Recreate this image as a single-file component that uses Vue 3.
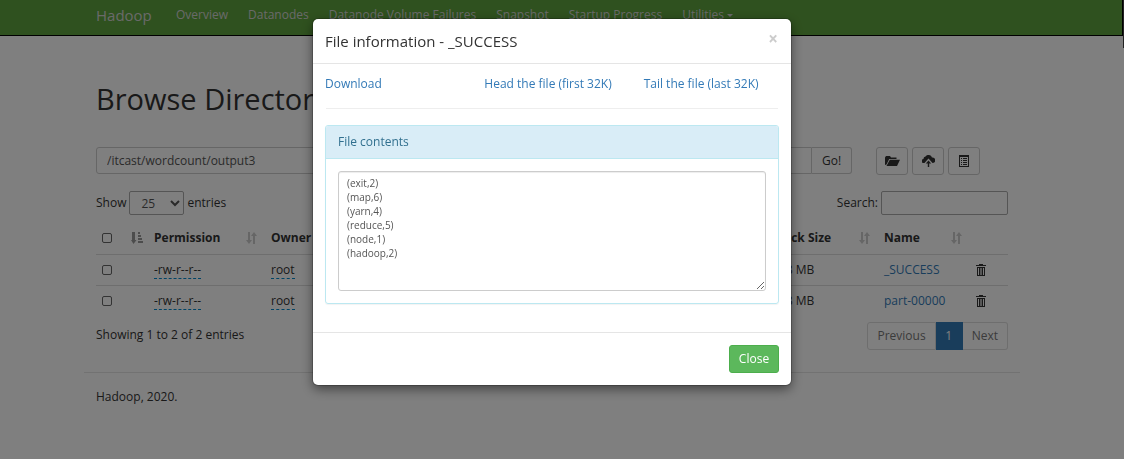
<script setup>
import { ref } from 'vue'

const navItems = ['Overview', 'Datanodes', 'Datanode Volume Failures', 'Snapshot', 'Startup Progress']
const columns = [
  { key: 'permission', label: 'Permission' },
  { key: 'owner', label: 'Owner' },
  { key: 'group', label: 'Group' },
  { key: 'size', label: 'Size' },
  { key: 'modified', label: 'Last Modified' },
  { key: 'replication', label: 'Replication' },
  { key: 'block', label: 'Block Size' },
  { key: 'name', label: 'Name' },
]
const files = [
  { permission: '-rw-r--r--', owner: 'root', group: 'root', size: '0 B', modified: 'Jul 12', replication: '1', block: '128 MB', name: '_SUCCESS' },
  { permission: '-rw-r--r--', owner: 'root', group: 'root', size: '55 B', modified: 'Jul 12', replication: '1', block: '128 MB', name: 'part-00000' },
]
const directory = ref('/itcast/wordcount/output3')
const search = ref('')
const pageSize = ref('25')
const contents = ref('(exit,2)\n(map,6)\n(yarn,4)\n(reduce,5)\n(node,1)\n(hadoop,2)')
</script>

<template>
  <div class="page">
    <header class="navbar">
      <nav class="container nav-inner">
        <a class="brand" href="#">Hadoop</a>
        <a v-for="item in navItems" :key="item" class="nav-link" href="#">{{ item }}</a>
        <a class="nav-link" href="#">Utilities <span class="caret"></span></a>
      </nav>
    </header>

    <main class="container">
      <h1>Browse Directory</h1>

      <div class="path-row">
        <div class="path-group">
          <input v-model="directory" class="path-input" type="text" aria-label="Directory">
          <button class="btn go" type="button">Go!</button>
        </div>
        <div class="actions">
          <button class="btn icon-btn" type="button" aria-label="Create directory">
            <svg width="15" height="12" viewBox="0 0 15 12"><path d="M0 10V2.500L1 1h4l1 1.500h5.500V4H4.200L1.500 9.500z" /><path d="M4.800 4.800H15L12 11H1.500z" /></svg>
          </button>
          <button class="btn icon-btn" type="button" aria-label="Upload files">
            <svg width="13" height="12" viewBox="0 0 13 12"><path d="M2.500 8H2A2 2 0 0 1 1.500 4 2.300 2.300 0 0 1 3.500 1.600 3.600 3.600 0 0 1 10 2.600 2.700 2.700 0 0 1 11 8H10.500L6.500 3.600z" /><path d="M6.500 5.400L9.200 8.400H7.200V12H5.800V8.400H3.800z" /></svg>
          </button>
          <button class="btn icon-btn" type="button" aria-label="Cut and paste">
            <svg width="12" height="12" viewBox="0 0 12 12"><path d="M1 0h10v12H1zM2 2v9h8V2z" fill-rule="evenodd" /><path d="M3 3h1v1H3zM5 3h4v1H5zM3 5h1v1H3zM5 5h4v1H5zM3 7h1v1H3zM5 7h4v1H5zM3 9h1v1H3zM5 9h4v1H5z" /></svg>
          </button>
        </div>
      </div>

      <div class="table-tools">
        <label class="tool">Show
          <select v-model="pageSize" class="page-size">
            <option>10</option>
            <option>25</option>
            <option>50</option>
          </select>
          entries</label>
        <label class="tool">Search: <input v-model="search" class="search" type="search"></label>
      </div>

      <table>
        <colgroup>
          <col class="c-check"><col class="c-permission"><col class="c-owner"><col class="c-group"><col class="c-size">
          <col class="c-modified"><col class="c-replication"><col class="c-block"><col class="c-name"><col class="c-delete">
        </colgroup>
        <thead>
          <tr>
            <th>
              <div class="head-cell">
                <input type="checkbox" aria-label="Select all">
                <svg class="sorted" width="12" height="12" viewBox="0 0 12 12"><path d="M1 0h3v8h1.500L2.500 12 0 8h1zM7 0h2v2H7zM7 3h3v2H7zM7 6h4v2H7zM7 9h5v2H7z" /></svg>
              </div>
            </th>
            <th v-for="col in columns" :key="col.key">
              <div class="head-cell">
                {{ col.label }}
                <svg class="sort" width="11" height="12" viewBox="0 0 11 12"><path d="M2 0h2v8h2L3 12 0 8h2zM7 12h2V4h2L8 0 5 4h2z" /></svg>
              </div>
            </th>
            <th></th>
          </tr>
        </thead>
        <tbody>
          <tr v-for="file in files" :key="file.name">
            <td><input type="checkbox" :aria-label="'Select ' + file.name"></td>
            <td><span class="editable">{{ file.permission }}</span></td>
            <td><span class="editable">{{ file.owner }}</span></td>
            <td><span class="editable">{{ file.group }}</span></td>
            <td>{{ file.size }}</td>
            <td>{{ file.modified }}</td>
            <td><span class="editable">{{ file.replication }}</span></td>
            <td>{{ file.block }}</td>
            <td><a href="#">{{ file.name }}</a></td>
            <td>
              <button class="trash" type="button" :aria-label="'Delete ' + file.name">
                <svg width="10" height="12" viewBox="0 0 10 12"><path d="M3 0h4v1h3v1H0V1h3zM1 3h8v9H1zM2 4v7h1V4zM4 4v7h.6V4zM5.400 4v7H6V4zM7 4v7h1V4z" fill-rule="evenodd" /></svg>
              </button>
            </td>
          </tr>
        </tbody>
      </table>

      <div class="table-foot">
        <span>Showing 1 to 2 of 2 entries</span>
        <nav class="pagination" aria-label="Pages">
          <a href="#">Previous</a><a class="active" href="#">1</a><a href="#">Next</a>
        </nav>
      </div>
    </main>
    <footer class="container">
      <hr>
      <p>Hadoop, 2020.</p>
    </footer>
  </div>

  <div class="scrollbar"></div>
  <div class="backdrop">
    <section class="modal" role="dialog" aria-labelledby="file-title">
      <header class="modal-header">
        <h2 id="file-title">File information - _SUCCESS</h2>
        <button class="dismiss" type="button" aria-label="Dismiss">×</button>
      </header>
      <div class="modal-body">
        <div class="links">
          <a href="#">Download</a>
          <a href="#">Head the file (first 32K)</a>
          <a href="#">Tail the file (last 32K)</a>
        </div>
        <div class="panel">
          <label class="panel-heading" for="file-contents">File contents</label>
          <div class="panel-body">
            <textarea id="file-contents" v-model="contents"></textarea>
          </div>
        </div>
      </div>
      <footer class="modal-footer">
        <button class="close-btn" type="button">Close</button>
      </footer>
    </section>
  </div>
</template>

<style>
html, body, #app { height: 100%; }
body { background: #fff; overflow: hidden; }
</style>

<style scoped>
* { box-sizing: border-box; }
.page, .backdrop {
  font-family: "Open Sans", "Noto Sans", sans-serif;
  font-size: 12px;
  line-height: 16px;
  color: #333;
}
input, select, textarea, button { font: inherit; color: inherit; margin: 0; }
a { color: #337ab7; text-decoration: none; }
h1, h2, p { margin: 0; font-weight: 400; }
.page { min-height: 100%; }
.container { width: calc(100% - 188px); max-width: 936px; margin: 0 104px 0 84px; padding: 0 12px; }
.navbar { height: 36px; margin-right: 1px; background: #5fa33e; border-bottom: 1px solid #000; border-right: 1px solid #000; }
.nav-inner { display: flex; align-items: flex-start; padding-top: 7px; white-space: nowrap; }
.nav-inner a { color: #d3d3d3; }
.nav-inner .brand { font-size: 15px; width: 70px; }
.nav-link { padding: 0 10px; }
.caret { display: inline-block; border: 3px solid transparent; border-top-color: currentColor; border-bottom: 0; vertical-align: middle; }
h1 { font-size: 29px; line-height: 32px; margin-top: 47px; margin-bottom: 32px; }
.path-row { display: flex; gap: 24px; }
.path-group { display: flex; flex: 1; }
.path-input { flex: 1; min-width: 0; height: 27px; padding: 4px 10px; color: #555; border: 1px solid #ccc; border-radius: 3px 0 0 3px; background: #fff; }
.btn { display: flex; align-items: center; justify-content: center; height: 28px; padding: 0; background: #fff; border: 1px solid #ccc; border-radius: 3px; }
.go { width: 40px; height: 27px; border-left: 0; border-radius: 0 3px 3px 0; }
.actions { display: flex; gap: 4px; margin-right: 28px; }
.icon-btn { width: 32px; }
svg { display: block; fill: currentColor; }
.table-tools { display: flex; justify-content: space-between; margin-top: 16px; }
.tool { display: flex; align-items: center; gap: 3px; }
.page-size { width: 55px; height: 24px; padding: 0 7px; background: #fff; border: 1px solid #aaa; border-radius: 2px; color: #555; }
.search { width: 127px; height: 24px; padding: 0 8px; background: #fff; border: 1px solid #aaa; border-radius: 2px; }
table { width: 100%; margin-top: 8px; table-layout: fixed; border-collapse: collapse; white-space: nowrap; }
th, td { height: 31px; padding: 0 8px; text-align: left; overflow: hidden; border-bottom: 1px solid #ddd; }
tbody tr:last-child td { border-bottom: 0; }
th:first-child, td:first-child { padding: 0 5px; }
input[type="checkbox"] { display: block; appearance: none; width: 10px; height: 10px; margin: 0 1px; border: 1px solid #666; border-radius: 2px; background: #fff; }
.head-cell { display: flex; align-items: center; justify-content: space-between; margin-right: -2px; }
.sorted { color: #999; }
.sort { color: #ccc; }
.c-check { width: 50px; }
.c-permission { width: 117px; }
.c-owner { width: 94px; }
.c-group { width: 90px; }
.c-size { width: 70px; }
.c-modified { width: 130px; }
.c-replication { width: 117px; }
.c-block { width: 112px; }
.c-name { width: 92px; }
.c-delete { width: 40px; }
.editable { border-bottom: 1px dashed #08c; }
.trash { display: block; padding: 0; border: 0; background: none; }
.table-foot { display: flex; justify-content: space-between; margin-top: 6px; line-height: 26px; }
.pagination { display: flex; }
.pagination a { min-width: 27px; padding: 0 9px; text-align: center; line-height: 26px; color: #777; border: 1px solid #ddd; border-left-width: 0; }
.pagination a:first-child { border-left-width: 1px; border-radius: 3px 0 0 3px; }
.pagination a:last-child { border-radius: 0 3px 3px 0; }
.pagination .active { color: #fff; background: #337ab7; border-color: #337ab7; }
hr { height: 1px; margin: 22px -12px 16px; border: 0; background: #e4e4e4; }
.scrollbar { position: fixed; top: 0; right: 0; width: 1px; height: 48px; background: #444; }
.backdrop { position: fixed; inset: 0; padding: 19px 20px 0 0; background: rgba(0, 0, 0, .5); }
.modal { width: 478px; margin: 0 auto; background: #fff; border-radius: 5px; box-shadow: 0 0 0 1px rgba(0, 0, 0, .2), 0 4px 12px rgba(0, 0, 0, .5); }
.modal-header { display: flex; justify-content: space-between; align-items: flex-start; padding: 12px 13px 11px 12px; border-bottom: 1px solid #e5e5e5; }
h2 { font-size: 15px; line-height: 21px; }
.dismiss { padding: 0; border: 0; background: none; color: #ccc; font-size: 17px; font-weight: 700; line-height: 16px; }
.modal-body { padding: 12px 12px 28px; }
.links { display: grid; grid-template-columns: repeat(3, 1fr); margin-right: -24px; padding-bottom: 16px; white-space: nowrap; }
.panel { position: relative; margin-top: 17px; border: 1px solid #bce8f1; border-radius: 3px; box-shadow: 0 1px 1px rgba(0, 0, 0, .05); }
.panel::before { content: ""; position: absolute; left: 0; right: 0; top: -18px; height: 1px; background: #eee; }
.panel-heading { display: block; padding: 8px 12px; color: #31708f; background: #d9edf7; border-bottom: 1px solid #bce8f1; border-radius: 2px 2px 0 0; }
.panel-body { padding: 12px; }
textarea { display: block; width: 100%; height: 120px; padding: 4px 8px; font-size: 10px; line-height: 14px; color: #555; background: #fff; border: 1px solid #ccc; border-radius: 3px; box-shadow: inset 0 1px 1px rgba(0, 0, 0, .075); }
.modal-footer { display: flex; justify-content: flex-end; padding: 12px; border-top: 1px solid #e5e5e5; }
.close-btn { width: 50px; height: 28px; padding: 0; color: #fff; background: #5cb85c; border: 1px solid #4cae4c; border-radius: 3px; }
</style>
